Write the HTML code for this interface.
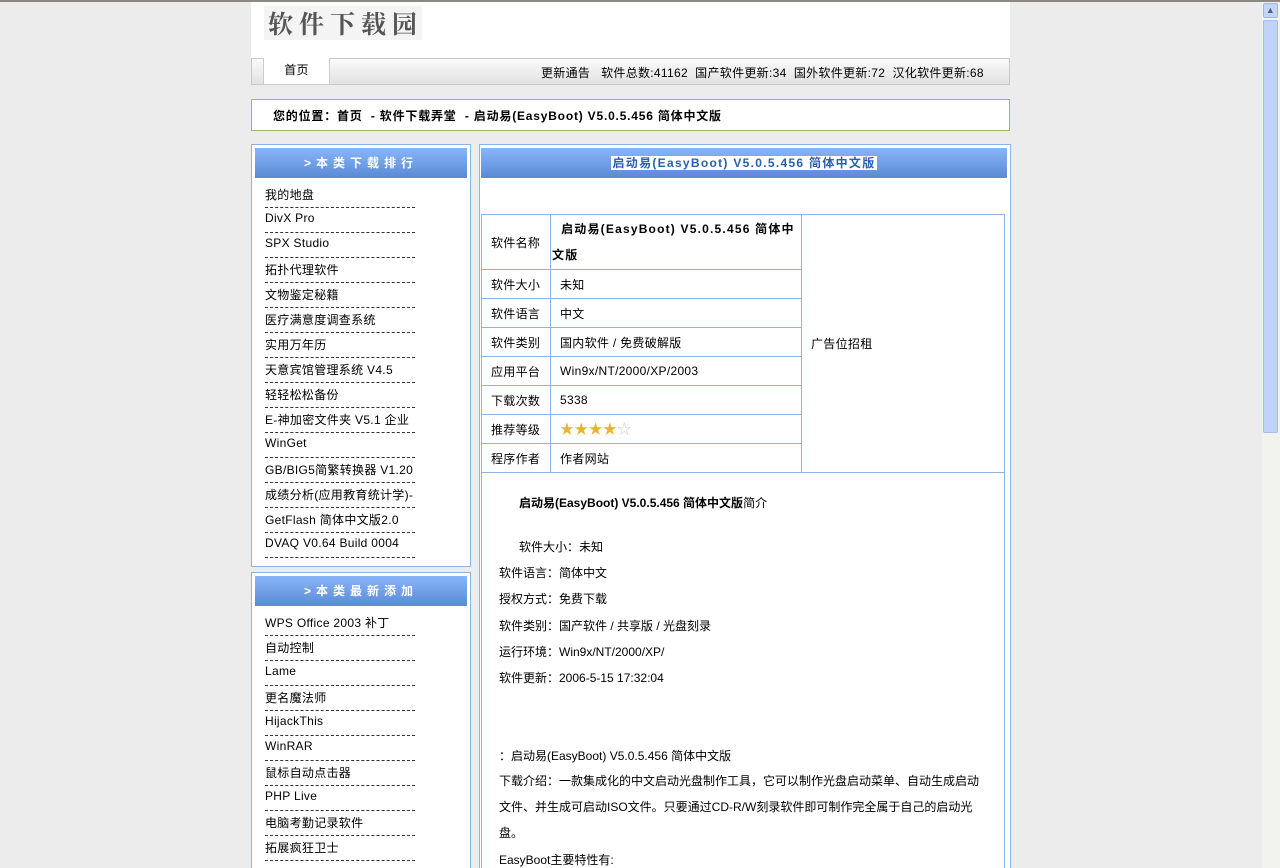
<!DOCTYPE html>
<html style="overflow:hidden"><head><meta charset="utf-8"><style>
*{margin:0;padding:0;box-sizing:border-box}
html,body{overflow:hidden}
body{width:1280px;height:868px;background:#ececec;font-family:"Liberation Sans","Noto Sans CJK SC",sans-serif;font-size:12px;color:#000;position:relative;letter-spacing:0.3px}
.topline{position:absolute;left:0;top:0;width:1280px;height:2px;background:#8c8a80}
.abs{position:absolute}
.hdr{left:251px;top:2px;width:759px;height:56px;background:#fff}
.logo{left:264px;top:6px;width:158px;height:34px;background:#f4f4f4;font-size:25px;letter-spacing:6px;color:#555;font-weight:bold;font-family:"Noto Serif CJK SC",serif;line-height:34px;padding-left:4px;white-space:nowrap;overflow:hidden}
.nav{left:251px;top:58px;width:759px;height:27px;border:1px solid #c8c8c8;background:linear-gradient(#fafafa,#e2e2e2)}
.tab{left:263px;top:58px;width:67px;height:27px;background:#fff;border:1px solid #ccc;border-top:none;text-align:center;line-height:24px}
.stats{left:541px;top:64px;white-space:nowrap}
.loc{left:251px;top:99px;width:759px;height:32px;background:#fff;border:1px solid #9cba5a;font-weight:bold;padding:7px 0 0 21px;letter-spacing:0.8px}
.box{background:#fff;border:1px solid #8fb3e6}
.bar{background:linear-gradient(#89b6fa,#5a8ad4);color:#fff;font-weight:bold;text-align:center;letter-spacing:5px;font-size:12px}
.list{position:absolute;left:13px;width:150px}
.list div{height:25px;border-bottom:1px dashed #333;padding-top:3px;white-space:nowrap;overflow:hidden}
table{border-collapse:collapse}
td{border:1px solid #8fb3e6;padding:0 9px}
.desc div{position:absolute;white-space:nowrap;letter-spacing:0}
</style></head><body>
<div class="topline"></div>
<div class="abs hdr"></div>
<div class="abs logo">软件下载园</div>
<div class="abs nav"></div>
<div class="abs tab">首页</div>
<div class="abs stats">更新通告&nbsp;&nbsp; 软件总数:41162&nbsp; 国产软件更新:34&nbsp; 国外软件更新:72&nbsp; 汉化软件更新:68</div>
<div class="abs loc">您的位置：首页 &nbsp;- 软件下载弄堂 &nbsp;- 启动易(EasyBoot) V5.0.5.456 简体中文版</div>

<div class="abs box" style="left:251px;top:144px;width:220px;height:423px">
<div class="bar" style="margin:3px;height:30px;line-height:30px">&gt;本类下载排行</div>
<div class="list" style="top:38px">
<div>我的地盘</div><div>DivX Pro</div><div>SPX Studio</div><div>拓扑代理软件</div><div>文物鉴定秘籍</div><div>医疗满意度调查系统</div><div>实用万年历</div><div>天意宾馆管理系统 V4.5</div><div>轻轻松松备份</div><div>E-神加密文件夹 V5.1 企业</div><div>WinGet</div><div>GB/BIG5简繁转换器 V1.20</div><div>成绩分析(应用教育统计学)-</div><div>GetFlash 简体中文版2.0</div><div>DVAQ V0.64 Build 0004</div>
</div></div>

<div class="abs box" style="left:251px;top:572px;width:220px;height:300px">
<div class="bar" style="margin:3px;height:30px;line-height:30px">&gt;本类最新添加</div>
<div class="list" style="top:38px">
<div>WPS Office 2003 补丁</div><div>自动控制</div><div>Lame</div><div>更名魔法师</div><div>HijackThis</div><div>WinRAR</div><div>鼠标自动点击器</div><div>PHP Live</div><div>电脑考勤记录软件</div><div>拓展疯狂卫士</div>
</div></div>

<div class="abs box" style="left:479px;top:144px;width:532px;height:730px">
<div class="bar" style="margin:3px 3px 0 1px;height:30px;line-height:30px;letter-spacing:1.3px"><span style="background:#fff;color:#2a5fb0;padding:0 1px">启动易(EasyBoot) V5.0.5.456 简体中文版</span></div>
<div style="height:36px"></div>
<table style="margin-left:1px;width:524px">
<tr style="height:55px"><td style="width:69px">软件名称</td><td style="width:251px;padding:0 0 0 1px;font-weight:bold;line-height:26px;letter-spacing:1.2px">&nbsp;&nbsp;启动易(EasyBoot) V5.0.5.456 简体中文版</td><td rowspan="8">广告位招租</td></tr>
<tr style="height:29px"><td>软件大小</td><td>未知</td></tr>
<tr style="height:29px"><td>软件语言</td><td>中文</td></tr>
<tr style="height:29px"><td>软件类别</td><td>国内软件 / 免费破解版</td></tr>
<tr style="height:29px"><td>应用平台</td><td>Win9x/NT/2000/XP/2003</td></tr>
<tr style="height:29px"><td>下载次数</td><td>5338</td></tr>
<tr style="height:29px"><td>推荐等级</td><td style="color:#e8b530;font-size:14px">★★★★<span style="color:#ccc">☆</span></td></tr>
<tr style="height:29px"><td>程序作者</td><td>作者网站</td></tr>
</table>
<div style="position:absolute;left:1px;top:327px;width:524px;height:400px;border-left:1px solid #8fb3e6;border-right:1px solid #8fb3e6" class="desc">
<div style="left:37px;top:22px"><b>启动易(EasyBoot) V5.0.5.456 简体中文版</b>简介</div>
<div style="left:37px;top:66px">软件大小：未知</div>
<div style="left:17px;top:92px">软件语言：简体中文</div>
<div style="left:17px;top:118px">授权方式：免费下载</div>
<div style="left:17px;top:145px">软件类别：国产软件 / 共享版 / 光盘刻录</div>
<div style="left:17px;top:171px">运行环境：Win9x/NT/2000/XP/</div>
<div style="left:17px;top:197px">软件更新：2006-5-15 17:32:04</div>
<div style="left:17px;top:275px">：启动易(EasyBoot) V5.0.5.456 简体中文版</div>
<div style="left:17px;top:300px">下载介绍：一款集成化的中文启动光盘制作工具，它可以制作光盘启动菜单、自动生成启动</div>
<div style="left:17px;top:326px">文件、并生成可启动ISO文件。只要通过CD-R/W刻录软件即可制作完全属于自己的启动光</div>
<div style="left:17px;top:352px">盘。</div>
<div style="left:17px;top:379px">EasyBoot主要特性有:</div>
</div>
</div>

<div class="abs" style="left:1262px;top:2px;width:18px;height:866px;background:#f3f3ee"></div>
<div class="abs" style="left:1263px;top:3px;width:15px;height:15px;background:#c4d4fa;border:1px solid #9db2e6;border-radius:2px;color:#4d6185;font-size:9px;text-align:center;line-height:13px">▲</div>
<div class="abs" style="left:1263px;top:20px;width:15px;height:413px;background:#c0d3fb;border:1px solid #a6bbef;border-radius:2px"></div>
</body></html>
